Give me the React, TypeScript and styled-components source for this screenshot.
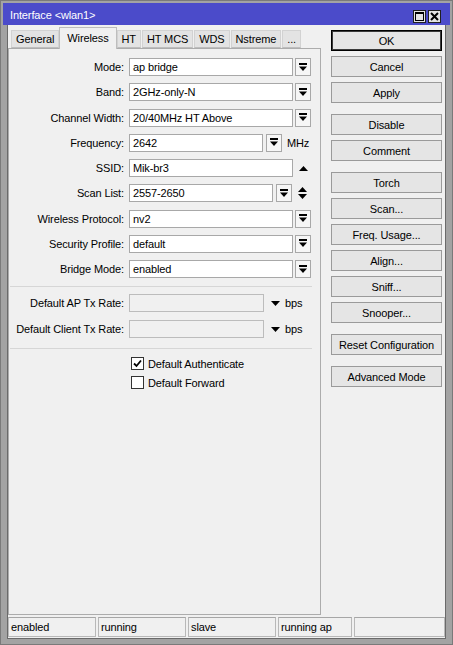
import React from 'react';
import styled, { createGlobalStyle } from 'styled-components';

const Global = createGlobalStyle`
  html, body { margin: 0; padding: 0; background: #a3a3a3; }
  body { font-family: "Liberation Sans", Arial, sans-serif; font-size: 11px; color: #000; letter-spacing: -0.12px; }
  * { box-sizing: border-box; }
`;

const Window = styled.div`
  width: 453px;
  height: 645px;
  background: #a3a3a3;
  border: 1px solid #7a7a7a;
  padding: 2px;
  display: flex;
  flex-direction: column;
`;

const TitleBar = styled.div`
  height: 22px;
  flex: none;
  background: #4b4bca;
  color: #fff;
  display: flex;
  align-items: center;
  padding: 1px 9px 0 7px;
  font-size: 11px;
`;

const TitleText = styled.span`
  flex: 1;
`;

const TitleButtons = styled.div`
  display: flex;
  gap: 2px;
  margin-top: 3px;
`;

const TitleButton = styled.div`
  width: 13px;
  height: 13px;
  background: #e4e4e4;
  border: 1px solid #202020;
  display: grid;
  place-items: center;
`;

const Body = styled.div`
  flex: 1;
  margin: 0 4px 3px 4px;
  background: #f0f0f0;
  border: 1px solid #6a6a6a;
  border-top: none;
  display: flex;
  flex-direction: column;
  padding: 2px 0 1px 0;
`;

const Main = styled.div`
  flex: 1;
  display: flex;
`;

const LeftColumn = styled.div`
  width: 313px;
  display: flex;
  flex-direction: column;
`;

const TabsRow = styled.div`
  height: 21px;
  display: flex;
  align-items: flex-end;
  padding-left: 3px;
  gap: 1px;
`;

const Tab = styled.div<{ $active?: boolean }>`
  height: ${p => (p.$active ? 22 : 18)}px;
  margin: 0 ${p => (p.$active ? -1 : 0)}px ${p => (p.$active ? -1 : 0)}px;
  padding: 0 ${p => (p.$active ? 7 : 4)}px ${p => (p.$active ? 2 : 0)}px;
  border: 1px solid ${p => (p.$active ? '#bdbdbd' : '#d2d2d2')};
  border-bottom: ${p => (p.$active ? 'none' : '1px solid #bdbdbd')};
  background: ${p => (p.$active ? '#f0f0f0' : '#e3e3e3')};
  display: flex;
  align-items: center;
  position: relative;
  z-index: ${p => (p.$active ? 1 : 0)};
`;

const Panel = styled.div`
  flex: 1;
  border: 1px solid #acacac;
  padding-top: 9px;
  display: flex;
  flex-direction: column;
`;

const Rows = styled.div<{ $gap: number }>`
  display: flex;
  flex-direction: column;
  gap: ${p => p.$gap}px;
`;

const Row = styled.div`
  height: 18px;
  display: flex;
  align-items: center;
`;

const Label = styled.div`
  width: 115px;
  margin-right: 5px;
  text-align: right;
  white-space: nowrap;
`;

const Input = styled.div<{ $w: number; $disabled?: boolean }>`
  width: ${p => p.$w}px;
  height: 18px;
  border: 1px solid ${p => (p.$disabled ? '#bcbcbc' : '#a8a8a8')};
  background: ${p => (p.$disabled ? '#f0f0f0' : '#fff')};
  padding-left: 3px;
  line-height: 16px;
  white-space: nowrap;
  overflow: hidden;
`;

const DropButton = styled.div<{ $ml?: number }>`
  width: 16px;
  height: 18px;
  margin-left: ${p => p.$ml ?? 2}px;
  border: 1px solid #a8a8a8;
  background: #f6f6f6;
  display: grid;
  place-items: center;
`;

const Unit = styled.span<{ $ml: number }>`
  margin-left: ${p => p.$ml}px;
`;

const Arrow = styled.div<{ $ml: number }>`
  margin-left: ${p => p.$ml}px;
  display: grid;
  place-items: center;
`;

const Separator = styled.div<{ $mt: number; $mb: number }>`
  height: 1px;
  background: #d6d6d6;
  margin: ${p => p.$mt}px 8px ${p => p.$mb}px 1px;
`;

const CheckRow = styled.div`
  height: 15px;
  display: flex;
  align-items: center;
  padding-left: 122px;
`;

const CheckBox = styled.div`
  width: 13px;
  height: 13px;
  border: 1px solid #333;
  background: #fff;
  display: grid;
  place-items: center;
  margin-right: 4px;
`;

const ButtonColumn = styled.div`
  width: 111px;
  margin: 3px 0 0 10px;
  display: flex;
  flex-direction: column;
  gap: 11px;
`;

const ButtonGroup = styled.div`
  display: flex;
  flex-direction: column;
  gap: 5px;
`;

const Button = styled.div<{ $default?: boolean }>`
  height: 21px;
  background: #e5e5e5;
  border: 1px solid ${p => (p.$default ? '#000' : '#9a9a9a')};
  box-shadow: ${p => (p.$default ? 'inset 0 0 0 1px #3a3a3a' : 'none')};
  display: flex;
  align-items: center;
  justify-content: center;
  white-space: nowrap;
`;

const StatusBar = styled.div`
  height: 20px;
  margin-top: 2px;
  display: flex;
  gap: 2px;
`;

const StatusCell = styled.div<{ $w?: number }>`
  ${p => (p.$w ? `width: ${p.$w}px;` : 'flex: 1;')}
  height: 20px;
  border: 1px solid #b8b8b8;
  border-top-color: #a6a6a6;
  padding-left: 2px;
  line-height: 18px;
`;

const DropIcon = () => (
  <svg width="8" height="9" viewBox="0 0 8 9">
    <rect x="0" y="0" width="8" height="2" fill="#000" />
    <polygon points="0,3.5 8,3.5 4,8" fill="#000" />
  </svg>
);

const DownTri = () => (
  <svg width="9" height="5" viewBox="0 0 9 5">
    <polygon points="0,0 9,0 4.5,5" fill="#000" />
  </svg>
);

const UpTri = () => (
  <svg width="9" height="5" viewBox="0 0 9 5">
    <polygon points="0,5 9,5 4.5,0" fill="#000" />
  </svg>
);

const UpDown = () => (
  <svg width="9" height="12" viewBox="0 0 9 12">
    <polygon points="0,5 9,5 4.5,0" fill="#000" />
    <polygon points="0,7 9,7 4.5,12" fill="#000" />
  </svg>
);

const Check = () => (
  <svg width="9" height="9" viewBox="0 0 9 9">
    <path d="M1 4.5 L3.5 7 L8 1.5" stroke="#000" strokeWidth="1.8" fill="none" />
  </svg>
);

const SelectRow = ({ label, value }: { label: string; value: string }) => (
  <Row>
    <Label>{label}</Label>
    <Input $w={164}>{value}</Input>
    <DropButton>
      <DropIcon />
    </DropButton>
  </Row>
);

export default function App() {
  return (
    <>
      <Global />
      <Window>
        <TitleBar>
          <TitleText>Interface &lt;wlan1&gt;</TitleText>
          <TitleButtons>
            <TitleButton>
              <svg width="9" height="9" viewBox="0 0 9 9">
                <rect x="0.5" y="0.5" width="8" height="8" fill="none" stroke="#000" />
                <rect x="0" y="0" width="9" height="2" fill="#000" />
              </svg>
            </TitleButton>
            <TitleButton>
              <svg width="9" height="9" viewBox="0 0 9 9">
                <path d="M1 1 L8 8 M8 1 L1 8" stroke="#000" strokeWidth="2" />
              </svg>
            </TitleButton>
          </TitleButtons>
        </TitleBar>
        <Body>
          <Main>
            <LeftColumn>
              <TabsRow>
                <Tab>General</Tab>
                <Tab $active>Wireless</Tab>
                <Tab>HT</Tab>
                <Tab>HT MCS</Tab>
                <Tab>WDS</Tab>
                <Tab>Nstreme</Tab>
                <Tab>...</Tab>
              </TabsRow>
              <Panel>
                <Rows $gap={7.25}>
                  <SelectRow label="Mode:" value="ap bridge" />
                  <SelectRow label="Band:" value="2GHz-only-N" />
                  <SelectRow label="Channel Width:" value="20/40MHz HT Above" />
                  <Row>
                    <Label>Frequency:</Label>
                    <Input $w={134}>2642</Input>
                    <DropButton $ml={3}>
                      <DropIcon />
                    </DropButton>
                    <Unit $ml={5}>MHz</Unit>
                  </Row>
                  <Row>
                    <Label>SSID:</Label>
                    <Input $w={164}>Mik-br3</Input>
                    <Arrow $ml={6}>
                      <UpTri />
                    </Arrow>
                  </Row>
                  <Row>
                    <Label>Scan List:</Label>
                    <Input $w={144}>2557-2650</Input>
                    <DropButton $ml={3}>
                      <DropIcon />
                    </DropButton>
                    <Arrow $ml={6}>
                      <UpDown />
                    </Arrow>
                  </Row>
                  <SelectRow label="Wireless Protocol:" value="nv2" />
                  <SelectRow label="Security Profile:" value="default" />
                  <SelectRow label="Bridge Mode:" value="enabled" />
                </Rows>
                <Separator $mt={8} $mb={7} />
                <Rows $gap={8}>
                  <Row>
                    <Label>Default AP Tx Rate:</Label>
                    <Input $w={135} $disabled />
                    <Arrow $ml={7}>
                      <DownTri />
                    </Arrow>
                    <Unit $ml={5}>bps</Unit>
                  </Row>
                  <Row>
                    <Label>Default Client Tx Rate:</Label>
                    <Input $w={135} $disabled />
                    <Arrow $ml={7}>
                      <DownTri />
                    </Arrow>
                    <Unit $ml={5}>bps</Unit>
                  </Row>
                </Rows>
                <Separator $mt={10} $mb={7} />
                <Rows $gap={4}>
                  <CheckRow>
                    <CheckBox>
                      <Check />
                    </CheckBox>
                    Default Authenticate
                  </CheckRow>
                  <CheckRow>
                    <CheckBox />
                    Default Forward
                  </CheckRow>
                </Rows>
              </Panel>
            </LeftColumn>
            <ButtonColumn>
              <ButtonGroup>
                <Button $default>OK</Button>
                <Button>Cancel</Button>
                <Button>Apply</Button>
              </ButtonGroup>
              <ButtonGroup>
                <Button>Disable</Button>
                <Button>Comment</Button>
              </ButtonGroup>
              <ButtonGroup>
                <Button>Torch</Button>
                <Button>Scan...</Button>
                <Button>Freq. Usage...</Button>
                <Button>Align...</Button>
                <Button>Sniff...</Button>
                <Button>Snooper...</Button>
              </ButtonGroup>
              <ButtonGroup>
                <Button>Reset Configuration</Button>
              </ButtonGroup>
              <ButtonGroup>
                <Button>Advanced Mode</Button>
              </ButtonGroup>
            </ButtonColumn>
          </Main>
          <StatusBar>
            <StatusCell $w={88}>enabled</StatusCell>
            <StatusCell $w={88}>running</StatusCell>
            <StatusCell $w={88}>slave</StatusCell>
            <StatusCell $w={74}>running ap</StatusCell>
            <StatusCell />
          </StatusBar>
        </Body>
      </Window>
    </>
  );
}
